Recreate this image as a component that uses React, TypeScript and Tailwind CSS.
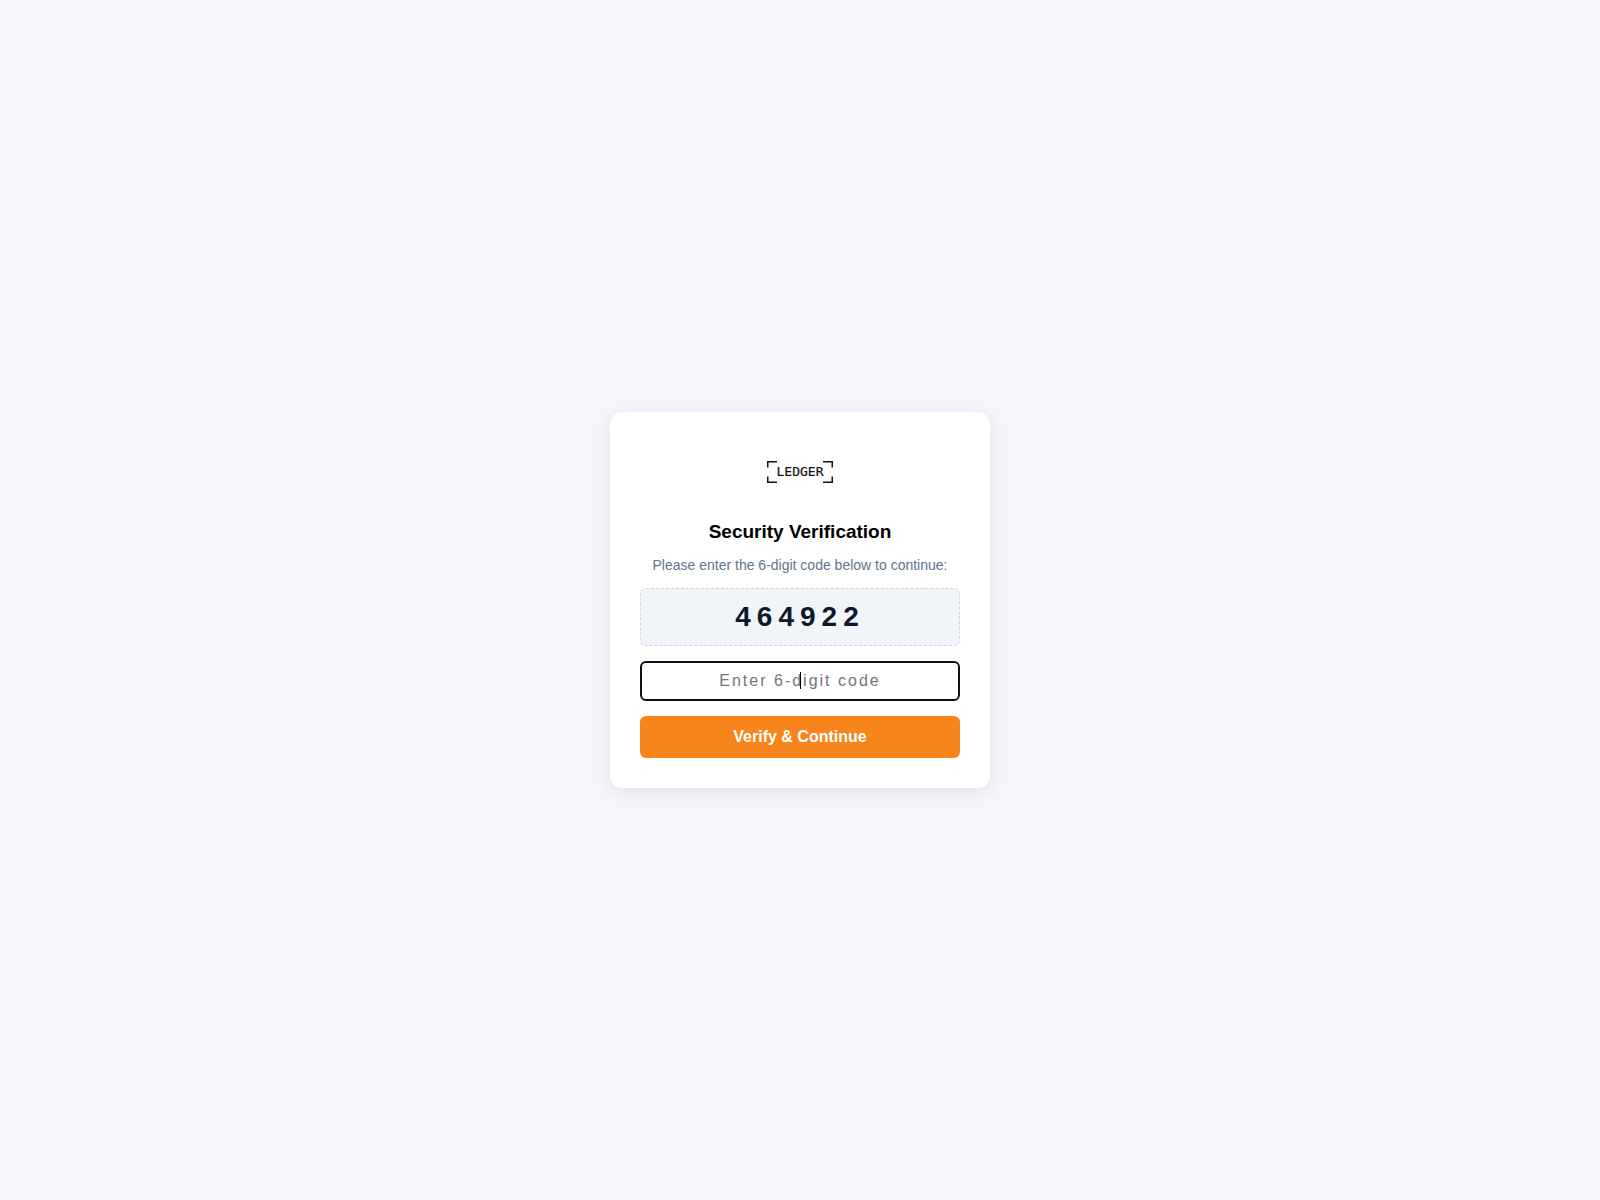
import { useState } from "react";

function Logo() {
  return (
    <svg className="mx-auto block" width="66" height="60" viewBox="0 0 66 60" role="img" aria-label="Ledger">
      <path
        d="M10 19.75H.75V25.5M56 19.75h9.25V25.5M10 40.25H.75V34.5M56 40.25h9.25V34.5"
        fill="none"
        stroke="#111"
        strokeWidth="1.5"
      />
      <text
        className="font-['DejaVu_Sans_Mono',monospace] text-[13px]"
        x="33"
        y="34"
        textAnchor="middle"
        fill="#111"
        stroke="#111"
        strokeWidth="0.2"
      >
        LEDGER
      </text>
    </svg>
  );
}

export default function App() {
  const [value, setValue] = useState("");

  return (
    <main className="flex min-h-screen items-center justify-center bg-[#f4f6fa] font-['Liberation_Sans',Arial,sans-serif]">
      <form
        className="w-full max-w-[380px] rounded-xl bg-white p-[30px] text-center shadow-[0_4px_20px_rgb(0_0_0/0.08)]"
        onSubmit={(event) => event.preventDefault()}
      >
        <Logo />
        <h1 className="mt-[18px] text-[19px] leading-6 font-bold text-black">Security Verification</h1>
        <p className="mt-3 text-sm leading-[18px] text-slate-500">
          Please enter the 6-digit code below to continue:
        </p>
        <div className="mt-[14px] rounded-md border border-dashed border-slate-300 bg-slate-100 py-3 text-[28px] leading-8 font-bold tracking-[6px] text-slate-900">
          464922
        </div>
        <div className="relative mt-[15px]">
          <input
            className="block h-10 w-full rounded-md border-2 border-[#111] text-center text-base tracking-[2px] text-black outline-none placeholder:text-[#757575] placeholder-shown:caret-transparent"
            aria-label="6-digit code"
            placeholder="Enter 6-digit code"
            inputMode="numeric"
            maxLength={6}
            value={value}
            onChange={(event) => setValue(event.target.value)}
            autoFocus
          />
          {/* steady caret while the field is empty */}
          {value === "" && (
            <span className="pointer-events-none absolute inset-0 flex items-center justify-center pb-px">
              <span className="ml-px h-[17px] w-px bg-black" />
            </span>
          )}
        </div>
        <button
          className="mt-[15px] block h-[42px] w-full rounded-md bg-[#f6851b] text-base font-bold text-white"
          type="submit"
        >
          Verify &amp; Continue
        </button>
      </form>
    </main>
  );
}
